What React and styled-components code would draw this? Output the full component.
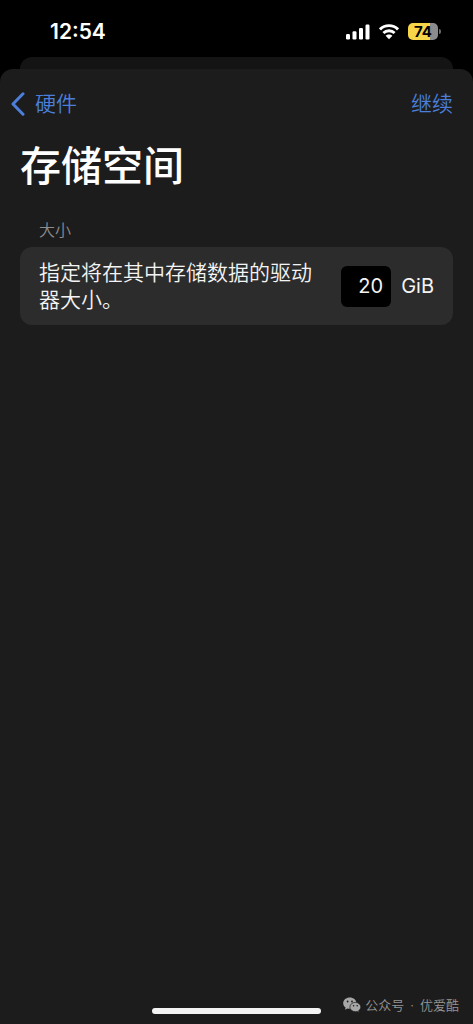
import React, { useState } from 'react';
import styled, { createGlobalStyle } from 'styled-components';

const GlobalStyle = createGlobalStyle`
  * {
    box-sizing: border-box;
  }

  body {
    margin: 0;
    background-color: #000;
    color: #fff;
    font-family: Inter, 'Noto Sans CJK SC', sans-serif;
    -webkit-font-smoothing: antialiased;
  }
`;

const Page = styled.div`
  display: flex;
  flex-direction: column;
  min-height: 100vh;
`;

const StatusBar = styled.header`
  display: flex;
  align-items: center;
  justify-content: space-between;
  height: 57px;
  padding: 6px 32px 0 50px;
`;

const Time = styled.time`
  font-size: 21px;
  font-weight: 600;
  line-height: 24px;
`;

const StatusIcons = styled.div`
  display: flex;
  align-items: center;
  gap: 9px;
`;

const Battery = styled.div`
  display: flex;
  align-items: center;
  gap: 1px;
`;

const BatteryBody = styled.div`
  width: 30px;
  height: 17px;
  border-radius: 5px;
  background: linear-gradient(to right, #f7d548 ${props => props.$level}%, #8b8b8d ${props => props.$level}%);
  color: #000;
  font-size: 15px;
  font-weight: 700;
  line-height: 17px;
  text-align: center;
`;

const BatteryTip = styled.div`
  width: 2px;
  height: 5px;
  border-radius: 0 2px 2px 0;
  background-color: #6b6b6d;
`;

const SheetBehind = styled.div`
  height: 12px;
  margin: 0 20px;
  border-radius: 12px 12px 0 0;
  background-color: #141414;
`;

const Sheet = styled.main`
  display: flex;
  flex: 1;
  flex-direction: column;
  border-radius: 13px 13px 0 0;
  background-color: #1c1c1c;
`;

const NavBar = styled.nav`
  display: flex;
  align-items: center;
  justify-content: space-between;
  height: 69px;
  padding: 0 20px 0 11px;
`;

const NavButton = styled.button`
  display: flex;
  align-items: center;
  gap: 10px;
  padding: 0;
  border: none;
  background: none;
  color: #4b7fdb;
  font-family: inherit;
  font-size: 21px;
  font-weight: 350;
  line-height: 28px;
  cursor: pointer;
`;

const Title = styled.h1`
  margin: 0;
  padding: 0 20px;
  font-size: 41px;
  font-weight: 500;
  line-height: 56px;
`;

const Section = styled.section`
  padding: 25px 20px 0;
`;

const SectionLabel = styled.h2`
  margin: 0 0 6px;
  padding: 0 19px;
  color: #8c8c91;
  font-size: 16px;
  font-weight: 350;
  line-height: 22px;
`;

const Card = styled.div`
  display: flex;
  align-items: center;
  gap: 10px;
  min-height: 78px;
  padding: 12px 19px;
  border-radius: 12px;
  background-color: #2c2c2c;
  color: #f4f4f4;
  font-size: 21px;
  line-height: 27px;
`;

const Description = styled.label`
  flex: 1;
  padding-right: 18px;
  font-weight: 350;
`;

const SizeInput = styled.input`
  width: 50px;
  height: 41px;
  padding: 0 8px;
  border: none;
  border-radius: 6px;
  background-color: #000;
  color: #f4f4f4;
  font-family: inherit;
  font-size: 20px;
  text-align: right;
`;

const Unit = styled.span`
  font-size: 20px;
`;

const Footer = styled.footer`
  display: grid;
  grid-template-columns: 1fr 169px 1fr;
  align-items: end;
  margin-top: auto;
  padding-bottom: 10px;
`;

const HomeIndicator = styled.div`
  grid-column: 2;
  height: 6px;
  border-radius: 3px;
  background-color: #f4f4f4;
`;

const Watermark = styled.div`
  display: flex;
  align-items: center;
  justify-content: flex-end;
  gap: 4px;
  padding-right: 14px;
  color: #969696;
  font-size: 13px;
  font-weight: 350;
  line-height: 18px;
  white-space: nowrap;
`;

const Dot = styled.span`
  margin: 0 6px;
`;

function SignalIcon() {
  return (
    <svg width="24" height="16" viewBox="0 0 24 16" fill="#fff" aria-hidden="true">
      <rect x="0" y="10" width="4" height="5.5" rx="1.2" />
      <rect x="6.5" y="7.2" width="4" height="8.3" rx="1.2" />
      <rect x="13" y="4" width="4" height="11.5" rx="1.2" />
      <rect x="19.5" y="0.5" width="4" height="15" rx="1.2" />
    </svg>
  );
}

function WifiIcon() {
  return (
    <svg width="20" height="16" viewBox="0 0 20 16" fill="none" stroke="#fff" strokeWidth="2.9" aria-hidden="true">
      <path d="M1 5.4C6 0.4 14 0.4 19 5.4" />
      <path d="M4.4 9C7.5 6 12.5 6 15.6 9" />
      <path d="M10 15.2L6.6 11.8C8.5 10 11.5 10 13.4 11.8Z" fill="#fff" stroke="none" />
    </svg>
  );
}

function BackIcon() {
  return (
    <svg width="14" height="24" viewBox="0 0 14 24" fill="none" stroke="currentColor" strokeWidth="3" strokeLinecap="round" strokeLinejoin="round" aria-hidden="true">
      <path d="M12 1.8L2 12L12 22.2" />
    </svg>
  );
}

function WechatIcon() {
  return (
    <svg width="18" height="16" viewBox="0 0 18 16" aria-hidden="true">
      <path d="M6.8 0.6C3.1 0.6 0.2 3 0.2 6.2C0.2 8 1.1 9.5 2.6 10.5L2 12.7L4.5 11.4C5.2 11.6 6 11.7 6.8 11.7C10.5 11.7 13.4 9.3 13.4 6.2C13.4 3 10.5 0.6 6.8 0.6Z" fill="#a6a6a6" />
      <path d="M12.4 5.4C9.3 5.4 6.9 7.5 6.9 10.1C6.9 12.7 9.3 14.7 12.4 14.7C13 14.7 13.6 14.6 14.2 14.4L16.1 15.5L15.6 13.7C17 12.8 17.8 11.5 17.8 10.1C17.8 7.5 15.5 5.4 12.4 5.4Z" fill="#a6a6a6" stroke="#1c1c1c" strokeWidth="0.7" />
      <g fill="#1c1c1c">
        <circle cx="4.6" cy="4.5" r="0.9" />
        <circle cx="9" cy="4.5" r="0.9" />
        <circle cx="10.6" cy="8.7" r="0.8" />
        <circle cx="14.2" cy="8.7" r="0.8" />
      </g>
    </svg>
  );
}

function App() {
  const [size, setSize] = useState('20');

  return (
    <Page>
      <GlobalStyle />
      <StatusBar>
        <Time>12:54</Time>
        <StatusIcons>
          <SignalIcon />
          <WifiIcon />
          <Battery>
            <BatteryBody $level={74}>74</BatteryBody>
            <BatteryTip />
          </Battery>
        </StatusIcons>
      </StatusBar>
      <SheetBehind />
      <Sheet>
        <NavBar>
          <NavButton type="button">
            <BackIcon />
            硬件
          </NavButton>
          <NavButton type="button">继续</NavButton>
        </NavBar>
        <Title>存储空间</Title>
        <Section>
          <SectionLabel>大小</SectionLabel>
          <Card>
            <Description htmlFor="size">指定将在其中存储数据的驱动器大小。</Description>
            <SizeInput
              id="size"
              inputMode="numeric"
              value={size}
              onChange={e => setSize(e.target.value)}
            />
            <Unit>GiB</Unit>
          </Card>
        </Section>
        <Footer>
          <HomeIndicator />
          <Watermark>
            <WechatIcon />
            <span>公众号<Dot>·</Dot>优爱酷</span>
          </Watermark>
        </Footer>
      </Sheet>
    </Page>
  );
}

export default App;
